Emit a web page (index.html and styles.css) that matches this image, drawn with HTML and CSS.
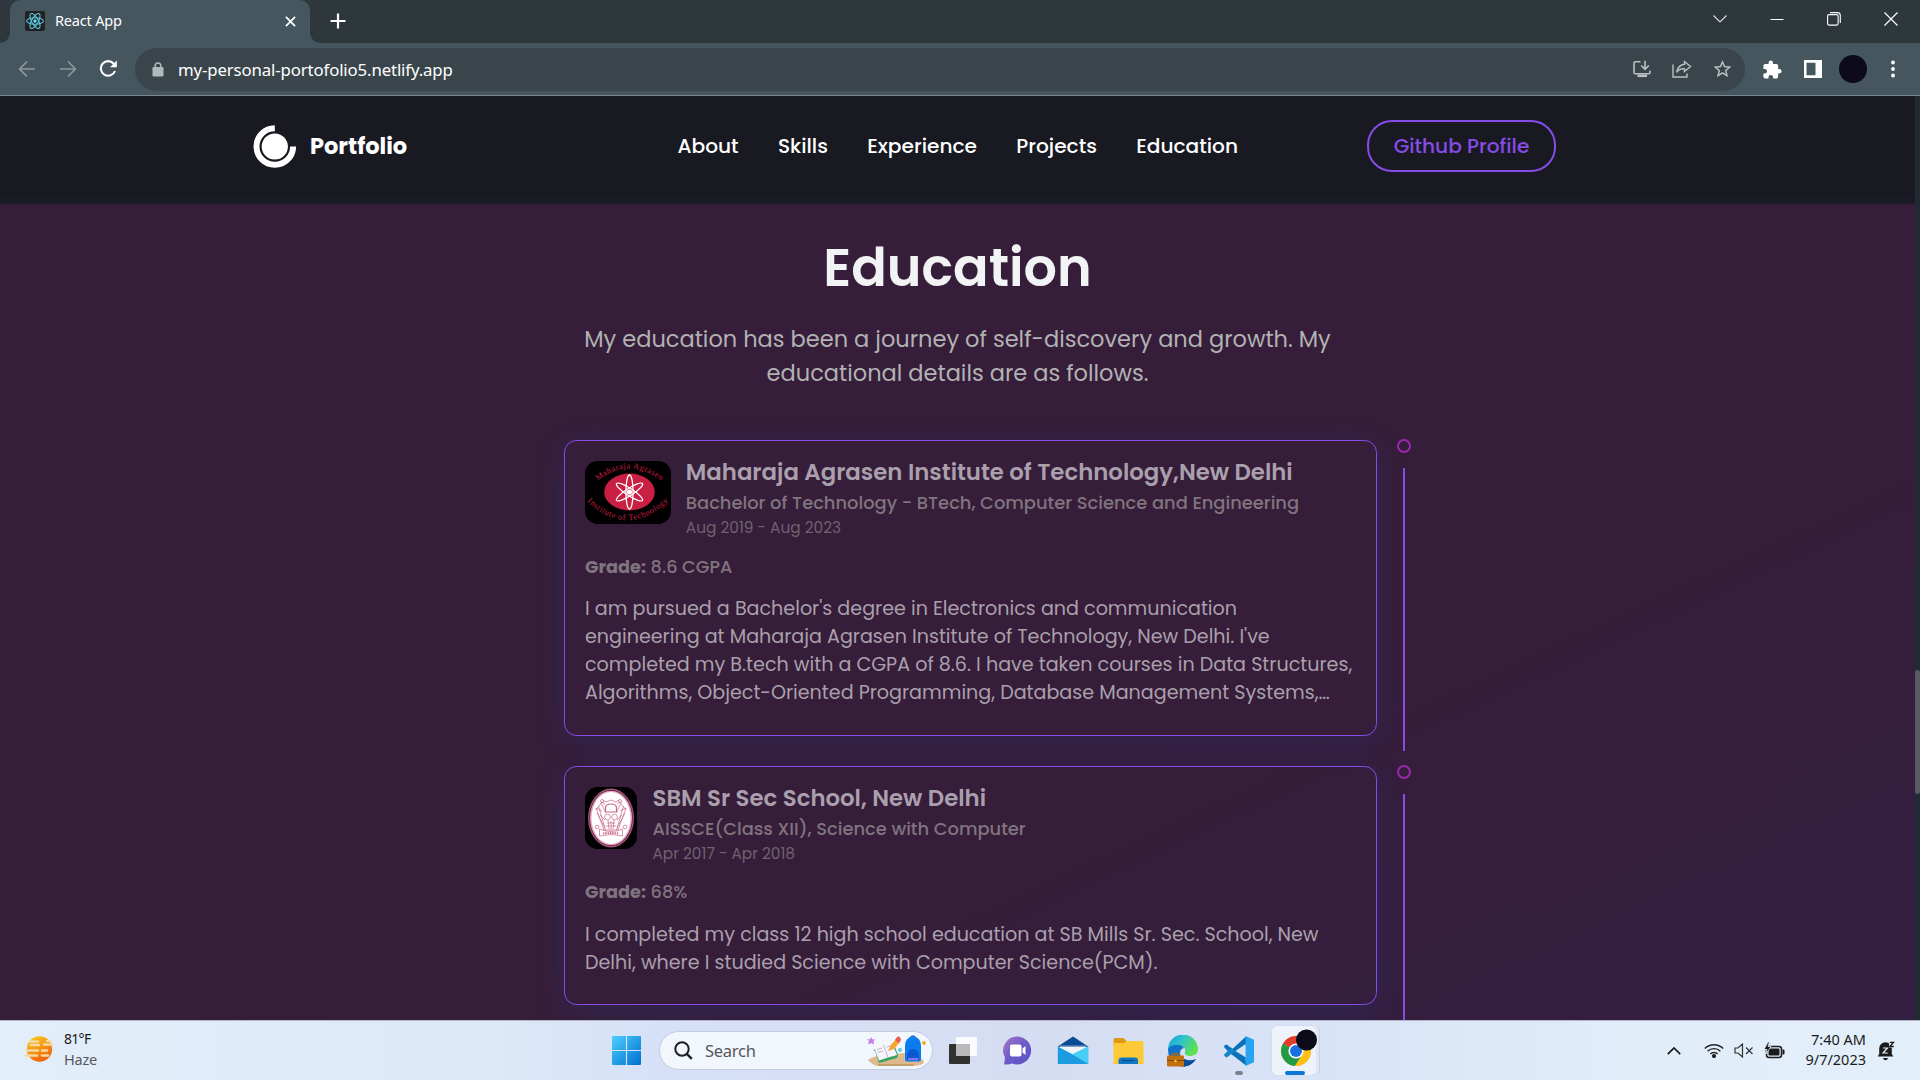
FILE: index.html
```html
<!DOCTYPE html>
<html lang="en">
<head>
<meta charset="utf-8">
<title>React App</title>
<link rel="stylesheet" href="styles.css">
</head>
<body>
<div class="tabstrip">
  <div class="tab">
    <svg class="favicon" width="20" height="20" viewBox="0 0 20 20"><rect width="20" height="20" rx="2" fill="#222"/><g fill="none" stroke="#5cc8e0" stroke-width="1.1"><ellipse cx="10" cy="10" rx="8.4" ry="3.3"/><ellipse cx="10" cy="10" rx="8.4" ry="3.3" transform="rotate(60 10 10)"/><ellipse cx="10" cy="10" rx="8.4" ry="3.3" transform="rotate(120 10 10)"/></g><circle cx="10" cy="10" r="1.7" fill="#61dafb"/></svg>
    <span class="tab-title">React App</span>
    <svg width="11" height="11" viewBox="0 0 12 12" stroke="#fff" stroke-width="1.9"><path d="M1 1l10 10M11 1L1 11"/></svg>
  </div>
  <svg class="newtab" width="16" height="16" viewBox="0 0 16 16" stroke="#fff" stroke-width="2.2"><path d="M8 .5v15M.5 8h15"/></svg>
  <div class="winctl">
    <span class="wc"><svg width="14" height="8" viewBox="0 0 14 8" fill="none" stroke="#d8dcde" stroke-width="1.2"><path d="M.5.5L7 7 13.500.5"/></svg></span>
    <span class="wc"><svg width="14" height="14" viewBox="0 0 14 14" stroke="#fff" stroke-width="1"><path d="M.5 7.500h13"/></svg></span>
    <span class="wc"><svg width="14" height="14" viewBox="0 0 14 14" fill="none" stroke="#fff" stroke-width="1.1"><rect x=".6" y="2.600" width="10.500" height="10.500" rx="1.500"/><path d="M3 .6h7.500a2.800 2.800 0 0 1 2.800 2.800V11"/></svg></span>
    <span class="wc"><svg width="14" height="14" viewBox="0 0 14 14" stroke="#fff" stroke-width="1.200"><path d="M.5.5l13 13M13.500.5l-13 13"/></svg></span>
  </div>
</div>
<div class="toolbar">
  <div class="navbtns">
    <span><svg width="18" height="18" viewBox="0 0 18 18" fill="none" stroke="#8c999f" stroke-width="1.700"><path d="M17 9H2M9 1.500L1.600 9 9 16.500"/></svg></span>
    <span><svg width="18" height="18" viewBox="0 0 18 18" fill="none" stroke="#8c999f" stroke-width="1.700"><path d="M1 9h15M9 1.500L16.400 9 9 16.500"/></svg></span>
    <span><svg width="18" height="18" viewBox="0 0 18 18" fill="none" stroke="#fff" stroke-width="2.100"><path d="M15 4A7.300 7.300 0 1 0 16 11"/><path d="M17.800.6v6.700h-6.700z" fill="#fff" stroke="none"/></svg></span>
  </div>
  <div class="omnibox">
    <svg class="lock" width="12" height="15" viewBox="0 0 12 15"><rect x=".5" y="5" width="11" height="9.500" rx="1.200" fill="#b3b9bb"/><path d="M3.200 6V3.700a2.800 2.800 0 0 1 5.600 0V6" fill="none" stroke="#b3b9bb" stroke-width="1.500"/></svg>
    <span class="url">my-personal-portofolio5.netlify.app</span>
    <div class="omni-icons">
      <span><svg width="18" height="18" viewBox="0 0 18 18" fill="none" stroke="#bcbfc1" stroke-width="1.600"><path d="M7.500 1.800H2.300q-1.300 0-1.300 1.300v9.400q0 1.300 1.300 1.300h13.400q1.300 0 1.300-1.300v-2"/><path d="M12 .8v8M8.200 5.500L12 9.300l3.800-3.800"/><path d="M4.500 15.800h9.500" stroke-width="2.600"/></svg></span>
      <span><svg width="20" height="18" viewBox="0 0 20 18" fill="none" stroke="#bcbfc1" stroke-width="1.400"><path d="M1 4.500v12.500h14v-3.500"/><path d="M12.500 1.500L18.500 6.500 12.500 11.500V8.800C9 8.500 6.500 9.700 4.700 12.300 5.500 7.800 8 4.800 12.500 4.300z"/></svg></span>
      <span><svg width="19" height="18" viewBox="0 0 24 24" fill="#bcbfc1"><path d="M24 8.700l-8.600-.75L12 0 8.600 8 0 8.700l6.500 5.700L4.600 23 12 18.400 19.400 23l-1.950-8.600zM12 16.100l-4.500 2.700 1.200-5.100-4-3.500 5.300-.45L12 4.900l2.050 4.850 5.250.45-4 3.500 1.200 5.100z"/></svg></span>
    </div>
  </div>
  <div class="ext">
    <span><svg width="19" height="19" viewBox="1.500 .5 22 22" fill="#fff"><path d="M20.500 11H19V7a2 2 0 0 0-2-2h-4V3.500a2.500 2.500 0 0 0-5 0V5H4a2 2 0 0 0-2 2v3.800h1.500a2.700 2.700 0 0 1 0 5.400H2V20a2 2 0 0 0 2 2h3.800v-1.500a2.700 2.700 0 0 1 5.400 0V22H17a2 2 0 0 0 2-2v-4h1.500a2.500 2.500 0 0 0 0-5z"/></svg></span>
    <span><svg width="18" height="18" viewBox="0 0 18 18"><path d="M0 0h18v18H0zM2.500 2.800v12.400h9V2.800z" fill="#fff" fill-rule="evenodd"/></svg></span>
    <span><i class="avatar"></i></span>
    <span><svg width="4" height="18" viewBox="0 0 4 18" fill="#fff"><circle cx="2" cy="2.500" r="1.900"/><circle cx="2" cy="9" r="1.900"/><circle cx="2" cy="15.500" r="1.900"/></svg></span>
  </div>
</div>
<div class="viewport">
  <div class="page">
    <nav class="nav">
      <div class="brand">
        <svg width="43" height="43" viewBox="0 0 43 43"><circle cx="21.800" cy="21.500" r="13.100" fill="#fff"/><path d="M21.800 3.200A18.300 18.300 0 1 0 40.100 21.500" fill="none" stroke="#fff" stroke-width="6"/></svg>
        <span class="brand-name">Portfolio</span>
      </div>
      <div class="links">
        <a>About</a><a>Skills</a><a>Experience</a><a>Projects</a><a>Education</a>
      </div>
      <a class="github">Github Profile</a>
    </nav>
    <section class="education">
      <h1>Education</h1>
      <p class="intro">My education has been a journey of self-discovery and growth. My<br>educational details are as follows.</p>
      <div class="timeline">
        <div class="item">
          <article class="card card-college">
            <header>
              <svg class="pic" width="86" height="63" viewBox="0 0 86 63">
                <rect width="86" height="63" fill="#000"/>
                <ellipse cx="44.500" cy="31" rx="25.300" ry="18.500" fill="#c91f42"/>
                <g fill="none" stroke="#fff" stroke-width="1.300"><ellipse cx="44.500" cy="31" rx="3.600" ry="17"/><ellipse cx="44.500" cy="31" rx="3.600" ry="15.500" transform="rotate(57 44.500 31)"/><ellipse cx="44.500" cy="31" rx="3.600" ry="15.500" transform="rotate(-57 44.500 31)"/></g>
                <circle cx="44.500" cy="31" r="2.600" fill="#fff"/>
                <defs><path id="top" d="M13 20Q43-5.500 78 21"/><path id="bot" d="M2 40.500Q43 79 86 38"/></defs>
                <g class="crest"><text><textPath href="#top" textLength="69">Maharaja Agrasen</textPath></text><text><textPath href="#bot" textLength="92">Institute of Technology</textPath></text></g>
              </svg>
              <div class="head">
                <h2>Maharaja Agrasen Institute of Technology,New Delhi</h2>
                <h3>Bachelor of Technology - BTech, Computer Science and Engineering</h3>
                <time>Aug 2019 - Aug 2023</time>
              </div>
            </header>
            <div class="grade"><b>Grade:</b> 8.6 CGPA</div>
            <p class="desc">I am pursued a Bachelor's degree in Electronics and communication<br>engineering at Maharaja Agrasen Institute of Technology, New Delhi. I've<br>completed my B.tech with a CGPA of 8.6. I have taken courses in Data Structures,<br>Algorithms, Object-Oriented Programming, Database Management Systems,…</p>
          </article>
          <div class="rail"><i class="dot"></i><i class="line"></i></div>
        </div>
        <div class="item">
          <article class="card card-school">
            <header>
              <svg class="pic" width="52" height="62" viewBox="0 0 52 62">
                <rect width="52" height="62" fill="#000"/>
                <ellipse cx="26" cy="31" rx="23" ry="29.500" fill="#b0527c"/><ellipse cx="26" cy="31" rx="21.700" ry="28" fill="#3d2442"/><ellipse cx="26" cy="31" rx="21" ry="27.300" fill="#e9a7be"/><ellipse cx="26" cy="31" rx="19.500" ry="26" fill="#fff"/>
                <g fill="none" stroke="#c9668b" stroke-width=".7"><path d="M11 21l8 22M13.500 19l7 24M11 21l6 3M16 16l5 10M41 21l-8 22M38.500 19l-7 24M41 21l-6 3M36 16l-5 10M11 23l6-8 3 2M41 23l-6-8-3 2M12 26l8 15M40 26l-8 15M18 43h16M15 28l5 5M37 28l-5 5M23 33l1 9M29 33l-1 9M26 34v9M18 13l3 2 5-2 5 2 3-2M22 36h8M21 39h10"/><path d="M20.500 25v-4q0-4 5.500-4t5.500 4v4z" stroke-width="1.200"/><circle cx="22.500" cy="30" r="2.800"/><circle cx="29.500" cy="30" r="2.800"/><circle cx="17" cy="14" r="1.500"/><circle cx="35" cy="14" r="1.500"/><circle cx="12" cy="40" r="1.800"/><circle cx="40" cy="40" r="1.800"/><path d="M14.500 42q11.500 5 23 0v7q-11.500-3-23 0z"/><path d="M18 46.500q8-1 16 0" stroke-width="1.800" stroke-dasharray="1.500 .8"/></g>
              </svg>
              <div class="head">
                <h2>SBM Sr Sec School, New Delhi</h2>
                <h3>AISSCE(Class XII), Science with Computer</h3>
                <time>Apr 2017 - Apr 2018</time>
              </div>
            </header>
            <div class="grade"><b>Grade:</b> 68%</div>
            <p class="desc">I completed my class 12 high school education at SB Mills Sr. Sec. School, New<br>Delhi, where I studied Science with Computer Science(PCM).</p>
          </article>
          <div class="rail"><i class="dot"></i><i class="line"></i></div>
        </div>
      </div>
    </section>
  </div>
  <div class="scrollbar"><i class="thumb"></i></div>
</div>
<div class="taskbar">
  <div class="weather">
    <svg width="30" height="28" viewBox="0 0 30 28"><defs><linearGradient id="sun" x1="0" y1="0" x2=".5" y2="1"><stop offset="0" stop-color="#ffd21a"/><stop offset="1" stop-color="#f0640c"/></linearGradient></defs><circle cx="15.500" cy="14" r="12.700" fill="url(#sun)"/><g stroke="#f4d9a0" stroke-width="2.600" stroke-linecap="round"><path d="M6 6.500h6M14 6.500h0M15 10h-8M23 6h3M20 9.500h8M3 15.500h11M2 20.500h11M18 15.500h5M18 20.500h6"/></g></svg>
    <div><span class="temp">81°F</span><span class="haze">Haze</span></div>
  </div>
  <svg class="start" width="29" height="29" viewBox="0 0 29 29"><defs><linearGradient id="win" x1="0" y1="0" x2="1" y2="1"><stop offset="0" stop-color="#4cd0ff"/><stop offset="1" stop-color="#006fd0"/></linearGradient></defs><path fill="url(#win)" d="M1 0h12.900v13.900H0V1Q0 0 1 0zM15.100 0H28q1 0 1 1v12.900H15.100zM0 15.100h13.900V29H1q-1 0-1-1zM15.100 15.100H29V28q0 1-1 1H15.100z"/></svg>
  <div class="search">
    <svg width="19" height="19" viewBox="0 0 19 19" fill="none" stroke="#1d1f22" stroke-width="2"><circle cx="8" cy="8" r="6.700"/><path d="M12.800 12.800l5 5" stroke-width="2.400"/></svg>
    <span>Search</span>
    <svg class="doodle" width="60" height="32" viewBox="0 0 60 32"><path d="M2 25q5-4 16-5l20-2q12 0 19 7l1 3q-4 3-11 3H12q-6-1-10-6z" fill="#dcb98f"/><path d="M12 30h36" stroke="#bf9560" stroke-width="1.600"/><path d="M5 2l1.300 2.500L9 4 7.500 6.500 8 9.500 5 8 2 9.500 3 6 1 4l3 .5z" fill="#c77df0"/><path d="M7 15l2 1 4 12 18-5 1-3-4-11z" fill="#3da35d"/><path d="M8 12.500l9-3 9-1.500 5 12-9 2.500-9 3z" fill="#f7f5fb"/><path d="M17.500 10l4.500 12.500M11 14.500l5-1.500M12 17.500l5-1.500M21 12l4-1M22 15l4-1" stroke="#a9a6c0" stroke-width=".8"/><path d="M23 16l1-5 6-7 4 3-6 7z" fill="#f7a52c"/><path d="M29 5l2-3q2-1 3 0l1 3-2 3z" fill="#ef5a50"/><circle cx="34" cy="15" r="2" fill="#5ec8dc"/><path d="M43.500 4q3.500-6 7 0" fill="none" stroke="#1c6bd0" stroke-width="1.500"/><path d="M39 11q0-9 8-9t8 9v13q0 2.500-2 2.500H41q-2 0-2-2.500z" fill="#0b7bf0"/><path d="M41 20q1-6 6-6t6 6v4.500H41z" fill="#0a58d0"/><path d="M42 24h10" stroke="#b07bf5" stroke-width="1.500"/><circle cx="58" cy="8" r="1.900" fill="#f5a81c"/></svg>
  </div>
  <div class="apps">
    <span><svg width="30" height="29" viewBox="0 0 30 29"><rect x="1" y="8" width="21" height="20" rx="1" fill="#31312f"/><rect x="8" y="1" width="21" height="19" rx="1" fill="#fff" fill-opacity=".88"/><rect x="8" y="8" width="14" height="12" fill="#b9b9b9"/></svg></span>
    <span><svg width="29" height="29" viewBox="0 0 29 29"><defs><linearGradient id="chat" x1="0" y1="0" x2="1" y2="1"><stop offset="0" stop-color="#a778c4"/><stop offset=".5" stop-color="#6d5bc8"/><stop offset="1" stop-color="#5a50c8"/></linearGradient></defs><path d="M15 .5A14 14 0 1 1 9 27.500Q5 29 1 28.200 2 25 1.800 21A14 14 0 0 1 15 .5z" fill="url(#chat)"/><rect x="7" y="8.500" width="11.500" height="12" rx="2" fill="#fff"/><path d="M19.500 12.500l3-2.500v9l-3-2.500z" fill="#fff"/></svg></span>
    <span><svg width="32" height="29" viewBox="0 0 32 29"><path d="M.8 10.500L16 .5l15.200 10z" fill="#0a4c94"/><path d="M3 9.500h26V25H3z" fill="#f0f4f9"/><path d="M3 9.500L.8 10.500h30.400L29 9.500z" fill="#0a4c94"/><path d="M.8 10.500V28h30.400V10.500L17 19z" fill="#1d9be0"/><path d="M31.200 10.500v17.500L15 18.200z" fill="#48cdf6"/></svg></span>
    <span><svg width="31" height="28" viewBox="0 0 31 28"><path d="M.5 3q0-2 2-2h8l3 3h0V9H.5z" fill="#dc9a0c"/><path d="M.5 6h10.500l2.500-2H29q1.500 0 1.500 1.500V27H.5z" fill="#fdc936"/><path d="M5.500 27v-3.500q0-3 3-3H22q3 0 3 3V27z" fill="#0f75c4"/><path d="M9 23.500h12" stroke="#0a4c8c" stroke-width="1.300"/></svg></span>
    <span><svg width="32" height="32" viewBox="0 0 32 32"><defs><linearGradient id="ed" x1="0" y1="0" x2="1" y2=".5"><stop offset="0" stop-color="#1ca0dc"/><stop offset=".5" stop-color="#30c4cc"/><stop offset="1" stop-color="#5fe04c"/></linearGradient></defs><path d="M1 15A15 15 0 0 1 31 14c0 5-4 7-8 7-4 0-6-2-5-4 1-4-2-6-5-6-5 0-9 1-12 4z" fill="url(#ed)"/><path d="M1 14c3-5 13-6 16-1-6 1-5 11 2 13 4 1 8-1 10-2-3 5-8 7.500-13 7.500C8 31.500 1 25 1 14z" fill="#1173c8"/><path d="M14 21c4 5 10 5 15 3-3 5-8 7.500-13 7.500z" fill="#0c4c94"/><rect x="0" y="20.500" width="17" height="11" rx="1" fill="#c2700c"/><path d="M0 25.500h17" stroke="#7d4404" stroke-width="1"/><path d="M5 20.500v-1.500h7v1.500" fill="none" stroke="#b06a10" stroke-width="1.300"/><circle cx="8.500" cy="26" r="1.300" fill="#ffc52c"/></svg></span>
    <span class="running"><svg width="30" height="30" viewBox="0 0 100 100"><path d="M74 1L28 43 9 28 1 32v6l22 22 13 9 38 30-2-28L38 50 74 26z" fill="#0a73b8"/><path d="M9 72l-8-5v-6l24-23 11 11-20 18z" fill="#1683cc"/><path d="M74 1l24 11q2 1 2 4v68q0 3-2 4L74 99q-3 0-2-5V6q-1-5 2-5z" fill="#27a3f2"/></svg></span>
    <span class="chrome"><span class="tile"><svg width="38" height="38" viewBox="0 0 38 38"><circle cx="16" cy="22" r="15" fill="#fbc116"/><path d="M16 22L3 14.500A15 15 0 0 1 29 14.500H16z" fill="#e33b2e"/><path d="M3 14.500A15 15 0 0 0 15 37l7.500-11.500L16 22z" fill="#229a47"/><path d="M16 15h13.200A15 15 0 0 1 15 37l7.500-12z" fill="#fbc116"/><circle cx="16" cy="22" r="7.600" fill="#fff"/><circle cx="16" cy="22" r="6" fill="#1a6fe0"/><circle cx="26.500" cy="11" r="10.500" fill="#0b0a16"/></svg></span></span>
  </div>
  <div class="tray">
    <span class="up"><svg width="14" height="8" viewBox="0 0 14 8" fill="none" stroke="#1b1b1b" stroke-width="1.700"><path d="M.8 7.200L7 1l6.200 6.200"/></svg></span>
    <span class="wifi"><svg width="20" height="15" viewBox="0 0 20 15" fill="none" stroke="#222" stroke-width="1.400"><path d="M.8 5.500a13 13 0 0 1 18.400 0M3.600 8.300a9 9 0 0 1 12.800 0M6.300 11a5.200 5.200 0 0 1 7.400 0"/><circle cx="10" cy="13" r="1.400" fill="#222"/></svg></span>
    <span class="vol"><svg width="20" height="15" viewBox="0 0 20 15" fill="none" stroke="#333" stroke-width="1.200"><path d="M1 5h3l4.500-4v13L4 10H1zM12 4.500l6.500 6.500M18.500 4.500L12 11"/></svg></span>
    <span class="bat"><svg width="21" height="17" viewBox="0 0 21 17"><rect x="2.500" y="4.500" width="15" height="11" rx="2.500" fill="none" stroke="#1b1b1b" stroke-width="1.500"/><rect x="4.500" y="6.500" width="11" height="7" rx="1" fill="#1b1b1b"/><path d="M18.500 7.500h1q1 0 1 1v3q0 1-1 1h-1z" fill="#1b1b1b"/><path d="M4 0L0 7.500h3L2 12l5-7.500H4L5.500 0z" fill="#1b1b1b" stroke="#e2edf9" stroke-width=".8"/></svg></span>
    <div class="clock"><span>7:40 AM</span><span>9/7/2023</span></div>
    <svg class="bell" width="18" height="20" viewBox="0 0 18 20"><path d="M2.200 13V7.500A6.300 6.300 0 0 1 8.500 1.200 6.300 6.300 0 0 1 14.800 7.500V13l1.500 2.500H.7z" fill="#1b1b1b"/><path d="M6 17h5q-.5 2.200-2.500 2.200T6 17z" fill="#1b1b1b"/><path d="M6 7h4.500L6 12h4.800" fill="none" stroke="#e2edf9" stroke-width="1.200"/><path d="M12 0h6v6.500h-6z" fill="#e2edf9"/><path d="M12.800 1.300h3.700L12.800 5.500h3.900" fill="none" stroke="#1b1b1b" stroke-width="1.300"/></svg>
  </div>
</div>
</body>
</html>
```
FILE: styles.css
```css
* { box-sizing: border-box; }
body { margin: 0; width: 1920px; height: 1080px; overflow: hidden; display: flex; flex-direction: column; font-family: "Noto Sans", "Open Sans", sans-serif; background: #1c1c27; }
svg { display: block; flex: none; }
h1, h2, h3, p { margin: 0; }
span, a, h2, h3, p { white-space: nowrap; }

.tabstrip { height: 43px; flex: none; background: #2d373c; display: flex; padding-left: 10px; }
.tab { position: relative; width: 300px; height: 43px; background: #45565f; border-radius: 10px 10px 0 0; display: flex; align-items: center; padding: 0 14.500px 1px 15px; color: #fff; font-size: 14.500px; letter-spacing: -.17px; }
.tab::before, .tab::after { content: ""; position: absolute; bottom: 0; width: 10px; height: 10px; }
.tab::before { left: -10px; background: radial-gradient(circle at 0 0, transparent 9.500px, #45565f 10px); }
.tab::after { right: -10px; background: radial-gradient(circle at 100% 0, transparent 9.500px, #45565f 10px); }
.tab-title { margin-left: 10px; margin-right: auto; padding-bottom: 2px; }
.newtab { margin: 13px 0 0 19.500px; }
.winctl { margin-left: auto; margin-right: 1px; display: flex; height: 37px; }
.wc { width: 57px; display: flex; align-items: center; justify-content: center; }

.toolbar { height: 53px; flex: none; background: #45565f; border-bottom: 1px solid #7a878d; display: flex; align-items: center; }
.navbtns { display: flex; width: 135px; padding-left: 7px; }
.navbtns span { width: 40.500px; display: flex; justify-content: center; }
.omnibox { width: 1610px; height: 43px; border-radius: 22px; background: #39454b; display: flex; align-items: center; padding: 0 3px 0 16.500px; color: #fff; font-size: 16.800px; letter-spacing: -.13px; }
.url { margin-left: 14.500px; margin-right: auto; }
.omni-icons { display: flex; }
.omni-icons span, .ext span { width: 40px; display: flex; justify-content: center; align-items: center; }
.ext { display: flex; padding-left: 7.500px; }
.avatar { width: 28px; height: 28px; border-radius: 50%; background: #0d0a1a; }

.viewport { height: 924px; flex: none; display: flex; }
.page { width: 1915px; height: 924px; overflow: hidden; font-family: Poppins, Inter, sans-serif; background: linear-gradient(155deg, rgba(0,60,209,0) 64%, rgba(0,60,209,.055) 100%), #361d39; }
.scrollbar { width: 5px; background: #1f2a33; padding-top: 574px; }
.thumb { display: block; height: 124px; border-radius: 3px; background: #585b64; }

.nav { height: 108px; background: #191922; border-bottom: 8px solid #1c1c26; padding: 0 359px 0 253px; display: flex; align-items: center; color: #fff; }
.brand { width: 424.500px; display: flex; align-items: center; gap: 14px; }
.brand-name { font-weight: 700; font-size: 22.500px; }
.links { display: flex; gap: 39.300px; font-weight: 500; font-size: 20.150px; }
.github { margin-left: auto; width: 189px; height: 52px; border: 2px solid #854ce6; border-radius: 25px; display: flex; align-items: center; justify-content: center; color: #854ce6; font-weight: 500; font-size: 20.150px; }

.education { padding-top: 34px; display: flex; flex-direction: column; align-items: center; }
h1 { font-weight: 600; font-size: 52.500px; line-height: 60px; color: #f2f3f4; }
.intro { margin-top: 24px; font-size: 22.500px; line-height: 34px; text-align: center; color: #b1b2b3; }
.timeline { align-self: stretch; margin: 49px 0 0 564px; display: flex; flex-direction: column; gap: 14px; }
.item { display: flex; gap: 20px; }
.card { width: 813px; margin-top: 1px; border: 1px solid #854ce6; border-radius: 12.500px; padding: 20px; box-shadow: 0 5px 30px rgba(23,92,230,.15); }
.card-college { height: 296px; margin-bottom: 15px; }
.card-school { height: 239px; margin-bottom: 15px; }
.card header { display: flex; height: 95px; }
.card-school header { height: 94px; }
.pic { border-radius: 12.500px; }
.head { padding-left: 14.800px; }
.card-school .head { padding-left: 15.500px; }
h2 { font-weight: 600; font-size: 22.830px; line-height: 23px; color: #aaa0ad; }
h3 { margin-top: 6px; font-weight: 500; font-size: 17.870px; line-height: 26px; color: #80747f; }
time { display: block; font-size: 15.350px; line-height: 23px; color: #6f6270; }
.grade { font-size: 17.700px; line-height: 22px; color: #80747f; font-weight: 500; }
.grade b { font-weight: 700; }
.desc { margin-top: 17px; font-size: 19.120px; line-height: 28px; color: #aaa0ad; }
.card-school .desc { margin-top: 18px; }
.rail { width: 14px; display: flex; flex-direction: column; align-items: center; gap: 15px; }
.dot { width: 14px; height: 14px; border: 2px solid #9c27b0; border-radius: 50%; flex: none; }
.line { flex: 1; width: 2px; background: #854ce6; }
.crest { font-family: "Liberation Serif", serif; font-size: 8.500px; fill: #c91f42; }

.taskbar { height: 60px; flex: none; border-top: 1px solid #b4b6c6; background: linear-gradient(90deg, #e2eef9 0, #dde9f8 25%, #d6e0f7 35%, #d6ddf2 55%, #d9e4f7 70%, #e1edf9 85%, #e2eef9 100%); display: flex; align-items: center; color: #1b1b1b; font-size: 14.500px; }
.weather { width: 612px; padding-left: 24px; display: flex; align-items: center; gap: 10px; line-height: 20px; }
.weather div { display: flex; flex-direction: column; align-items: flex-start; padding-bottom: 3px; }
.weather svg { margin-bottom: 3px; }
.temp { font-size: 14px; letter-spacing: -.7px; }
.haze { color: #55585d; letter-spacing: -.2px; }
.search { margin-left: 18px; width: 274px; height: 39px; border-radius: 20px; background: #f2f6fd; border: 1px solid #c3cbdf; display: flex; align-items: center; padding-left: 14px; font-size: 16.500px; letter-spacing: -.25px; color: #55585d; }
.search span { margin-left: 12px; }
.doodle { margin-left: auto; margin-right: 6px; }
.apps { display: flex; margin-left: 2px; }
.apps > span { width: 55.200px; height: 59px; display: flex; align-items: center; justify-content: center; position: relative; }
.running::after { content: ""; position: absolute; left: 24px; bottom: 5px; width: 8px; height: 4px; border-radius: 2px; background: #7d828c; }
.tile { width: 44px; height: 49px; border-radius: 5px; background: #eef3fb; box-shadow: 4px 0 0 -1px #dfe6f5, 5px 0 0 -1px #c9d3e6, 0 0 1px #b9c3da; display: flex; padding: 3px 0 0 8px; }
.chrome::after { content: ""; position: absolute; left: 19px; bottom: 5px; width: 20px; height: 4px; border-radius: 2px; background: #0a78d4; }
.tray { margin-left: auto; width: 253px; display: flex; align-items: center; }
.up { width: 37px; }
.wifi { width: 30px; }
.vol { width: 30px; }
.bat { width: 32px; }
.clock { width: 70px; display: flex; flex-direction: column; align-items: flex-end; line-height: 20px; padding-bottom: 4px; }
.bell { margin-left: 11px; }
```
